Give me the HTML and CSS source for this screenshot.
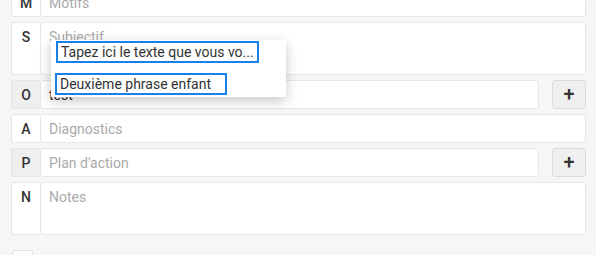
FILE: index.html
```html
<!DOCTYPE html>
<html lang="fr">
<head>
    <meta charset="UTF-8">
    <title>SOAP</title>
    <link rel="stylesheet" href="styles.css">
</head>
<body>
    <div class="soap">
        <div class="row">
            <div class="label">M</div>
            <div class="field"><span class="placeholder">Motifs</span></div>
        </div>
        <div class="row tall">
            <div class="label">S</div>
            <div class="field">
                <span class="placeholder">Subjectif</span>
            </div>
            <div class="popup">
                <div class="item first">Tapez ici le texte que vous vo...</div>
                <div class="item">Deuxième phrase enfant</div>
            </div>
        </div>
        <div class="row">
            <div class="label button">O</div>
            <div class="field short"><span class="value">test</span></div>
            <div class="plus">+</div>
        </div>
        <div class="row">
            <div class="label">A</div>
            <div class="field"><span class="placeholder">Diagnostics</span></div>
        </div>
        <div class="row">
            <div class="label button">P</div>
            <div class="field short"><span class="placeholder">Plan d'action</span></div>
            <div class="plus">+</div>
        </div>
        <div class="row tall">
            <div class="label">N</div>
            <div class="field"><span class="placeholder">Notes</span></div>
        </div>
        <div class="footer">
            <div class="small-btn"></div>
        </div>
    </div>
</body>
</html>
```

FILE: styles.css
```css
body {
    margin: 0;
    background-color: #f5f6f6;
    font-family: Roboto, "Liberation Sans", sans-serif;
    overflow: hidden;
}

.soap {
    margin-top: -12px;
    padding: 0 10px 0 11px;
}

.row {
    position: relative;
    display: flex;
    height: 29px;
    margin-bottom: 5px;
}

.row.tall {
    height: 53px;
}

.label {
    width: 29px;
    box-sizing: border-box;
    border: 1px solid #e6e6e6;
    border-right: none;
    border-radius: 3px 0 0 3px;
    background-color: #fff;
    color: #333;
    font-size: 14px;
    font-weight: 500;
    text-align: center;
    line-height: 28px;
}

.label.button {
    background-color: #efefef;
}

.field {
    flex: 1;
    box-sizing: border-box;
    border: 1px solid #e6e6e6;
    border-radius: 3px;
    background-color: #fff;
    padding: 0 8px;
    font-size: 14px;
    line-height: 28px;
}

.field.short {
    margin-right: 13px;
}

.placeholder {
    color: #aaa;
}

.value {
    color: #333;
}

.plus {
    width: 34px;
    box-sizing: border-box;
    border: 1px solid #dcdcdc;
    border-radius: 3px;
    background-color: #efefef;
    color: #333;
    font-size: 20px;
    font-weight: 500;
    text-align: center;
    line-height: 26px;
}

.popup {
    position: absolute;
    left: 40px;
    top: 18px;
    width: 235px;
    height: 57px;
    box-sizing: border-box;
    padding: 1px 0 0 4px;
    background-color: #fff;
    box-shadow: 0 4px 12px rgba(0, 0, 0, 0.22);
    z-index: 2;
}

.item {
    display: inline-block;
    box-sizing: border-box;
    height: 22px;
    border: 2px solid #1a7fe8;
    padding: 0 3px;
    color: #333;
    font-size: 14px;
    line-height: 18px;
    margin-bottom: 10px;
}

.item.first {
    margin-left: 1px;
    width: 203px;
}

.item + .item {
    width: 172px;
}

.footer {
    padding-top: 10px;
}

.small-btn {
    width: 21px;
    height: 5px;
    box-sizing: border-box;
    border: 1px solid #e0e0e0;
    border-bottom: none;
    border-radius: 3px 3px 0 0;
    background-color: #fff;
    margin-left: 1px;
}
```
